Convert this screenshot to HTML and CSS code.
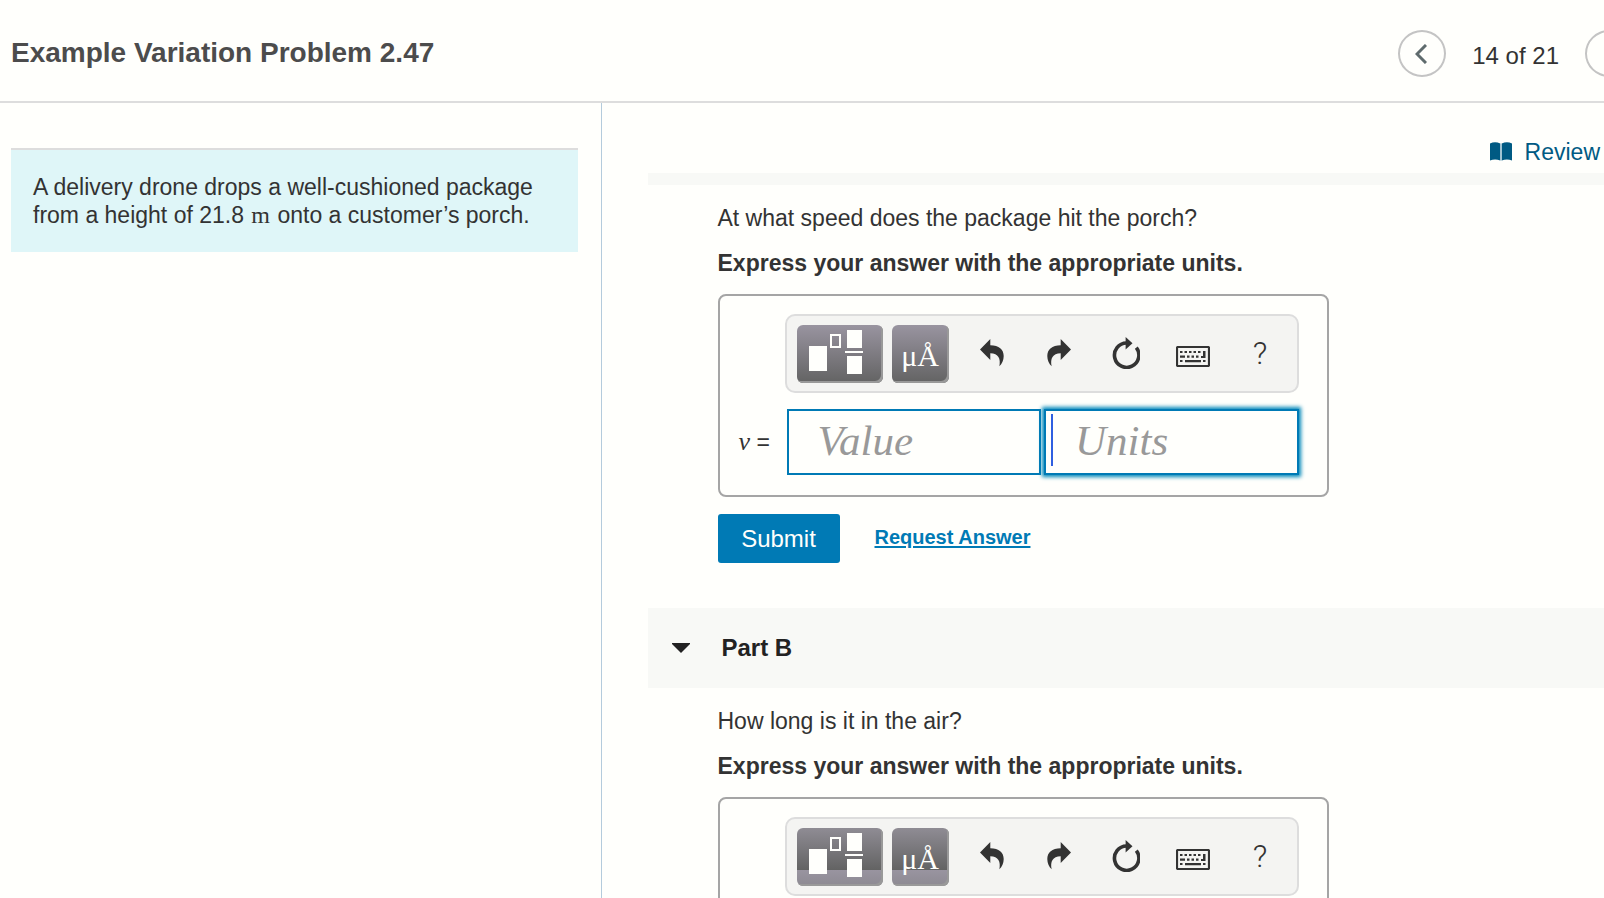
FILE: index.html
```html
<!DOCTYPE html>
<html lang="en">
<head>
    <meta charset="UTF-8">
    <meta name="viewport" content="width=device-width, initial-scale=1.0">
    <title>Example Variation Problem 2.47</title>
    <link rel="stylesheet" href="styles.css">
</head>
<body>
    <!-- Shared toolbar icons -->
    <svg class="sprite" aria-hidden="true">
        <symbol id="icon-templates" viewBox="0 0 86 58">
            <rect x="12" y="21" width="18" height="25" fill="#fffffc"/>
            <rect x="34" y="10" width="9" height="12" fill="none" stroke="#fffffc" stroke-width="2"/>
            <rect x="50" y="5" width="15" height="18" fill="#fffffc"/>
            <rect x="48" y="26" width="18" height="2" fill="#fffffc"/>
            <rect x="50" y="31" width="15" height="18" fill="#fffffc"/>
        </symbol>
        <symbol id="icon-undo" viewBox="0 0 24 28">
            <path d="M0 10.500 10.300 0V6.300C19 6.500 23.700 10.500 23.700 17 23.700 21 22 24.800 19.400 27.300 20.800 19.500 18.500 14.500 10.300 14.300V21Z"/>
        </symbol>
        <symbol id="icon-redo" viewBox="0 0 24 28">
            <path d="M24 10.500 13.700 0V6.300C5 6.500.3 10.500.3 17 .3 21 2 24.800 4.600 27.300 3.200 19.500 5.500 14.500 13.700 14.300V21Z"/>
        </symbol>
        <symbol id="icon-reset" viewBox="0 0 28 32">
            <path d="M14.500 6A12.200 12.200 0 1 0 24.300 10.700" fill="none" stroke="#333" stroke-width="3.600"/>
            <path d="M13.600 0 20.500 6.300 13.600 12.500Z"/>
        </symbol>
        <symbol id="icon-keyboard" viewBox="0 0 34 21">
            <rect x="1" y="1" width="32" height="19" rx="1" fill="none" stroke="#333" stroke-width="2.200"/>
            <path d="M4 5h2.500v2H4zM8.500 5h2.500v2h-2.500zM13 5h2.500v2h-2.500zM17.500 5h2.500v2h-2.500zM22 5h2.500v2H22zM27 5h2.500v7H25v-2h2zM4 9.500h5v2.200H4zM11 9.500h2.500v2.200H11zM15.500 9.500h2.500v2.200h-2.500zM20 9.500h2.500v2.200H20zM4 14h2.500v2H4zM9 14h16v2.200H9zM27 14h2.500v2H27z"/>
        </symbol>
    </svg>

    <header class="header">
        <h1>Example Variation Problem 2.47</h1>
        <nav class="pager">
            <button class="pager-btn prev" type="button" aria-label="Previous item">
                <svg width="12" height="20" viewBox="0 0 12 20"><path d="M11 1 2 10l9 9" fill="none" stroke="#5f6b6d" stroke-width="3"/></svg>
            </button>
            <span class="pager-text">14 of 21</span>
            <button class="pager-btn next" type="button" aria-label="Next item">
                <svg width="12" height="20" viewBox="0 0 12 20"><path d="M1 1l9 9-9 9" fill="none" stroke="#5f6b6d" stroke-width="3"/></svg>
            </button>
        </nav>
    </header>

    <div class="columns">
        <aside class="problem">
            <p class="problem-text">A delivery drone drops a well-cushioned package from a height of 21.8 <span class="unit">m</span> onto a customer’s porch.</p>
        </aside>

        <main class="parts">
            <div class="review">
                <a href="#">
                    <svg width="22" height="19" viewBox="0 0 22 19">
                        <path d="M0 1.500Q5-.8 10.300 1.500V18.500Q5 16.500 0 18.500Z" fill="#005a83"/>
                        <path d="M22 1.500Q17-.8 11.700 1.500V18.500Q17 16.500 22 18.500Z" fill="#005a83"/>
                        <path d="M11 1.500v17" stroke="#8fb9cc" stroke-width="1"/>
                    </svg>
                    Review
                </a>
            </div>

            <div class="part-strip"></div>
            <section class="part">
                <p>At what speed does the package hit the porch?</p>
                <p class="instructions">Express your answer with the appropriate units.</p>
                <div class="answer">
                    <div class="toolbar">
                        <button class="tool templates" type="button" aria-label="Templates"><svg width="86" height="58"><use href="#icon-templates"/></svg></button>
                        <button class="tool symbols" type="button">μÅ</button>
                        <button class="icon-btn" type="button" aria-label="Undo"><svg width="24" height="28"><use href="#icon-undo"/></svg></button>
                        <button class="icon-btn" type="button" aria-label="Redo"><svg width="24" height="28"><use href="#icon-redo"/></svg></button>
                        <button class="icon-btn" type="button" aria-label="Reset"><svg width="28" height="32"><use href="#icon-reset"/></svg></button>
                        <button class="icon-btn keyboard" type="button" aria-label="Keyboard shortcuts"><svg width="34" height="21"><use href="#icon-keyboard"/></svg></button>
                        <button class="icon-btn" type="button">?</button>
                    </div>
                    <label class="variable" for="value-a"><i>v</i> =</label>
                    <div class="fields">
                        <input id="value-a" type="text" placeholder="Value">
                        <div class="field-active">
                            <input type="text" placeholder="Units" aria-label="Units">
                            <span class="caret"></span>
                        </div>
                    </div>
                </div>
                <div class="actions">
                    <button class="submit" type="button">Submit</button>
                    <a class="request" href="#">Request Answer</a>
                </div>
            </section>

            <h2 class="part-title">
                <svg width="18" height="10" viewBox="0 0 18 10"><path d="M0 0h18v1L9 10 0 1Z" fill="#222"/></svg>
                Part B
            </h2>
            <section class="part">
                <p>How long is it in the air?</p>
                <p class="instructions">Express your answer with the appropriate units.</p>
                <div class="answer">
                    <div class="toolbar toolbar-idle">
                        <button class="tool templates" type="button" aria-label="Templates"><svg width="86" height="58"><use href="#icon-templates"/></svg></button>
                        <button class="tool symbols" type="button">μÅ</button>
                        <button class="icon-btn" type="button" aria-label="Undo"><svg width="24" height="28"><use href="#icon-undo"/></svg></button>
                        <button class="icon-btn" type="button" aria-label="Redo"><svg width="24" height="28"><use href="#icon-redo"/></svg></button>
                        <button class="icon-btn" type="button" aria-label="Reset"><svg width="28" height="32"><use href="#icon-reset"/></svg></button>
                        <button class="icon-btn keyboard" type="button" aria-label="Keyboard shortcuts"><svg width="34" height="21"><use href="#icon-keyboard"/></svg></button>
                        <button class="icon-btn" type="button">?</button>
                    </div>
                </div>
            </section>
        </main>
    </div>
</body>
</html>
```
FILE: styles.css
```css
* {
    box-sizing: border-box;
}

body {
    font-family: "Liberation Sans", Arial, sans-serif;
    font-size: 23px;
    line-height: 28px;
    background-color: #fffffc;
    color: #333;
    margin: 0;
    height: 100vh;
    display: flex;
    flex-direction: column;
    overflow: hidden;
}

h1, h2, p {
    margin: 0;
}

button, input {
    font-family: inherit;
    margin: 0;
    padding: 0;
}

button {
    cursor: pointer;
}

.sprite {
    position: absolute;
    width: 0;
    height: 0;
}

/* Header */
.header {
    display: flex;
    flex: none;
    justify-content: space-between;
    align-items: center;
    height: 103px;
    padding-left: 11px;
    border-bottom: 2px solid #ddd;
    overflow: hidden;
}

.header h1 {
    font-size: 28px;
    line-height: 32px;
    padding-top: 4px;
    color: #4c4c4c;
}

/* The next button runs past the right edge */
.pager {
    display: flex;
    align-items: center;
    gap: 26px;
    margin-right: -29px;
    padding-top: 6px;
}

.pager-btn {
    display: flex;
    align-items: center;
    justify-content: center;
    width: 48px;
    height: 47px;
    border: 2px solid #c4c4c4;
    border-radius: 50%;
    background: none;
}

.prev {
    padding-right: 2px;
}

.next {
    padding-left: 2px;
}

.pager-text {
    font-size: 24px;
    padding-top: 5px;
}

/* Columns */
.columns {
    display: flex;
    flex: 1;
    min-height: 0;
    overflow: hidden;
}

.problem {
    flex: none;
    width: 37.5%;
    padding: 45px 23px 0 11px;
    border-right: 1px solid #b4cbdc;
}

.problem-text {
    padding: 23px 22px;
    border-top: 2px solid #ddd;
    background-color: #dff6f8;
}

.unit {
    font-family: "Liberation Serif", "Times New Roman", serif;
    font-size: 24px;
    line-height: 20px;
    padding: 0 1px;
}

.parts {
    flex: 1;
    min-width: 0;
    padding-left: 46px;
}

.review {
    display: flex;
    justify-content: flex-end;
    align-items: center;
    height: 70px;
    padding: 27px 4px 0 0;
}

.review a {
    display: flex;
    align-items: center;
    gap: 13px;
    color: #005a83;
    text-decoration: none;
}

.part-strip {
    height: 12px;
    background-color: #f8f9f6;
}

.part {
    padding: 19px 0 45px 70px;
}

.instructions {
    font-weight: bold;
    margin: 17px 0;
}

/* Answer box */
.answer {
    display: grid;
    grid-template-columns: 47px 1fr;
    gap: 16px 0;
    align-items: center;
    max-width: 611px;
    padding: 18px 28px 20px 18px;
    border: 2px solid #a5a5a5;
    border-radius: 8px;
}

.toolbar {
    grid-column: 2;
    display: flex;
    align-items: center;
    padding: 9px 0 8px 10px;
    border: 2px solid #ddd;
    border-radius: 10px;
    background-color: #f4f4f2;
}

.tool {
    height: 58px;
    margin-right: 9px;
    border: 0;
    border-radius: 6px;
    background: linear-gradient(#9994a0, #636363);
    box-shadow: inset -2px -2px 0 #999;
    color: #fffffc;
}

.toolbar-idle .tool {
    background: linear-gradient(#8f8c94, #636363 72%, #9994a0 72%, #8d8a92);
}

.templates {
    width: 86px;
}

.templates svg {
    display: block;
}

.symbols {
    width: 57px;
    padding-top: 4px;
    font-family: "Liberation Serif", "Times New Roman", serif;
    font-size: 30px;
}

.icon-btn {
    display: flex;
    align-items: center;
    justify-content: center;
    width: 67px;
    height: 54px;
    padding: 0 0 3px 2px;
    border: 0;
    background: none;
    color: #333;
    fill: #333;
    font-family: Roboto, sans-serif;
    font-weight: 300;
    font-size: 32px;
}

.keyboard {
    padding: 5px 0 0 2px;
}

.variable {
    padding-left: 1px;
    font-size: 23px;
}

.variable i {
    font-family: "Liberation Serif", "Times New Roman", serif;
    font-size: 26px;
}

.fields {
    display: grid;
    grid-template-columns: 1fr 1fr;
    gap: 3px;
    padding-left: 2px;
}

.fields input {
    display: block;
    width: 100%;
    height: 66px;
    padding: 0 28px 4px 29px;
    border: 2px solid #007ab5;
    border-radius: 0;
    background-color: #fffffc;
    font-family: "Liberation Serif", "Times New Roman", serif;
    font-style: italic;
    font-size: 43px;
    color: #333;
    outline: none;
}

.fields input::placeholder {
    color: #999;
    opacity: 1;
}

.field-active {
    position: relative;
}

.field-active input {
    box-shadow: 0 0 4px 2px #0087b9;
}

.caret {
    position: absolute;
    top: 5px;
    left: 7px;
    width: 2px;
    height: 52px;
    background-color: #2f5fe0;
}

/* Buttons under the answer */
.actions {
    display: flex;
    align-items: center;
    gap: 35px;
    margin-top: 17px;
}

.submit {
    width: 122px;
    height: 49px;
    border: 0;
    border-radius: 3px;
    background-color: #007ab5;
    color: #fffffc;
    font-size: 24px;
}

.request {
    color: #007ab5;
    font-size: 20px;
    font-weight: bold;
    text-underline-offset: 2px;
    text-decoration-thickness: 2px;
    padding-bottom: 3px;
}

.part-title {
    display: flex;
    align-items: center;
    gap: 32px;
    height: 80px;
    padding-left: 24px;
    background-color: #f8f9f6;
    font-size: 24px;
    color: #222;
}
```
